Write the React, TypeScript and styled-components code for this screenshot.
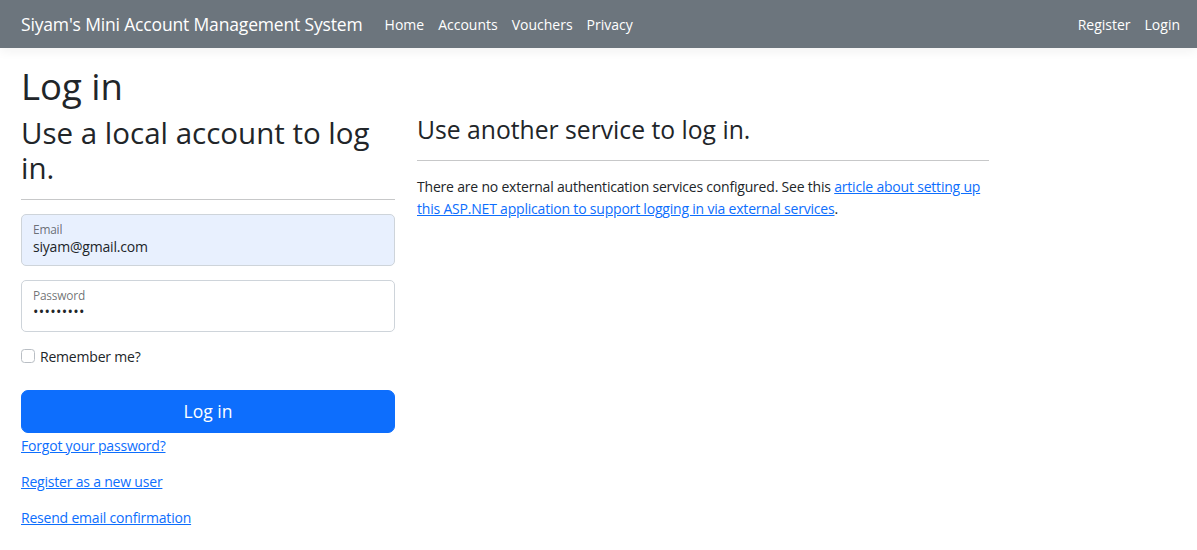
import React from "react";
import styled, { createGlobalStyle } from "styled-components";

const Global = createGlobalStyle`
  html, body { margin: 0; padding: 0; background: #fff; }
  body {
    font-family: "Segoe UI", "Open Sans", "Noto Sans", sans-serif;
    font-size: 14px;
    line-height: 1.5;
    color: #212529;
    letter-spacing: -0.2px;
  }
  * { box-sizing: border-box; }
`;

const NavBar = styled.header`
  height: 48px;
  background: #6c757d;
  display: flex;
  align-items: center;
  padding: 0 10px 0 21px;
  box-shadow: 0 4px 10px rgba(0, 0, 0, 0.05);
  margin-bottom: 17px;
  letter-spacing: 0;
`;

const Brand = styled.a`
  color: #fff;
  font-size: 17.5px;
  letter-spacing: -0.16px;
  text-decoration: none;
  margin-right: 15px;
  white-space: nowrap;
`;

const NavList = styled.nav<{ $end?: boolean }>`
  display: flex;
  margin-left: ${(p) => (p.$end ? "auto" : "0")};
`;

const NavLink = styled.a`
  color: #fff;
  font-size: 14px;
  text-decoration: none;
  padding: 0 7px;
`;

const Main = styled.main`
  padding: 0 21px;
`;

const Title = styled.h1`
  font-size: 36.5px;
  font-weight: 500;
  line-height: 1.2;
  letter-spacing: 0;
  margin: 0 0 6px;
`;

const Row = styled.div`
  display: flex;
  gap: 22px;
  align-items: flex-start;
`;

const Column = styled.section<{ $w: number }>`
  width: ${(p) => p.$w}px;
  flex: none;
`;

const SectionHeading = styled.h2<{ $size: number; $gap: number }>`
  font-size: ${(p) => p.$size}px;
  font-weight: 500;
  line-height: 1.2;
  letter-spacing: 0;
  margin: 0 0 ${(p) => p.$gap}px;
`;

const Rule = styled.hr<{ $after: number }>`
  border: 0;
  border-top: 1px solid #212529;
  opacity: 0.25;
  margin: 0 0 ${(p) => p.$after}px;
`;

const Floating = styled.div`
  margin-bottom: 14px;
`;

const Field = styled.div<{ $filled?: boolean }>`
  height: 52px;
  border: 1px solid #ced4da;
  border-radius: 5px;
  background: ${(p) => (p.$filled ? "#e8f0fe" : "#fff")};
  padding: 7px 11px 0;
  display: flex;
  flex-direction: column;
`;

const FieldLabel = styled.span`
  font-size: 11.9px;
  color: rgba(33, 37, 41, 0.65);
  line-height: 14px;
  margin-bottom: 1px;
`;

const FieldValue = styled.span`
  font-size: 14px;
  line-height: 20px;
  color: #212529;
`;

const Dots = styled.span`
  font-size: 14.5px;
  line-height: 20px;
  letter-spacing: 0.3px;
  color: #212529;
  margin-top: -1px;
`;

const CheckRow = styled.label`
  display: flex;
  align-items: center;
  gap: 5px;
  height: 21px;
  margin: 1px 0 23px 0;
`;

const Box = styled.span`
  width: 14px;
  height: 14px;
  border: 1px solid #b9bec4;
  border-radius: 3.5px;
  background: #fff;
  display: inline-block;
  flex: none;
`;

const Button = styled.button`
  width: 100%;
  height: 43px;
  border: 1px solid #0d6efd;
  background: #0d6efd;
  color: #fff;
  font-family: inherit;
  font-size: 17.5px;
  letter-spacing: 0;
  border-radius: 7px;
  display: block;
  padding: 0;
`;

const LinkLine = styled.p<{ $first?: boolean }>`
  margin: ${(p) => (p.$first ? "2px" : "0")} 0 14px;
  line-height: 22px;
`;

const Link = styled.a`
  color: #0d6efd;
  text-decoration: underline;
`;

const Para = styled.p`
  margin: 0;
  line-height: 22px;
`;

export default function App() {
  return (
    <>
      <Global />
      <NavBar>
        <Brand href="#">Siyam's Mini Account Management System</Brand>
        <NavList>
          <NavLink href="#">Home</NavLink>
          <NavLink href="#">Accounts</NavLink>
          <NavLink href="#">Vouchers</NavLink>
          <NavLink href="#">Privacy</NavLink>
        </NavList>
        <NavList $end>
          <NavLink href="#">Register</NavLink>
          <NavLink href="#">Login</NavLink>
        </NavList>
      </NavBar>
      <Main>
        <Title>Log in</Title>
        <Row>
          <Column $w={374}>
            <SectionHeading $size={29.5} $gap={13}>
              Use a local account to log in.
            </SectionHeading>
            <Rule $after={14} />
            <Floating>
              <Field $filled>
                <FieldLabel>Email</FieldLabel>
                <FieldValue>siyam@gmail.com</FieldValue>
              </Field>
            </Floating>
            <Floating>
              <Field>
                <FieldLabel>Password</FieldLabel>
                <Dots>•••••••••</Dots>
              </Field>
            </Floating>
            <CheckRow>
              <Box />
              Remember me?
            </CheckRow>
            <Button type="button">Log in</Button>
            <LinkLine $first>
              <Link href="#">Forgot your password?</Link>
            </LinkLine>
            <LinkLine>
              <Link href="#">Register as a new user</Link>
            </LinkLine>
            <LinkLine>
              <Link href="#">Resend email confirmation</Link>
            </LinkLine>
          </Column>
          <Column $w={572}>
            <SectionHeading as="h3" $size={24.7} $gap={16}>
              Use another service to log in.
            </SectionHeading>
            <Rule $after={15} />
            <Para>
              There are no external authentication services configured. See this{" "}
              <Link href="#">
                article about setting up this ASP.NET application to support logging in via external services
              </Link>
              .
            </Para>
          </Column>
        </Row>
      </Main>
    </>
  );
}
